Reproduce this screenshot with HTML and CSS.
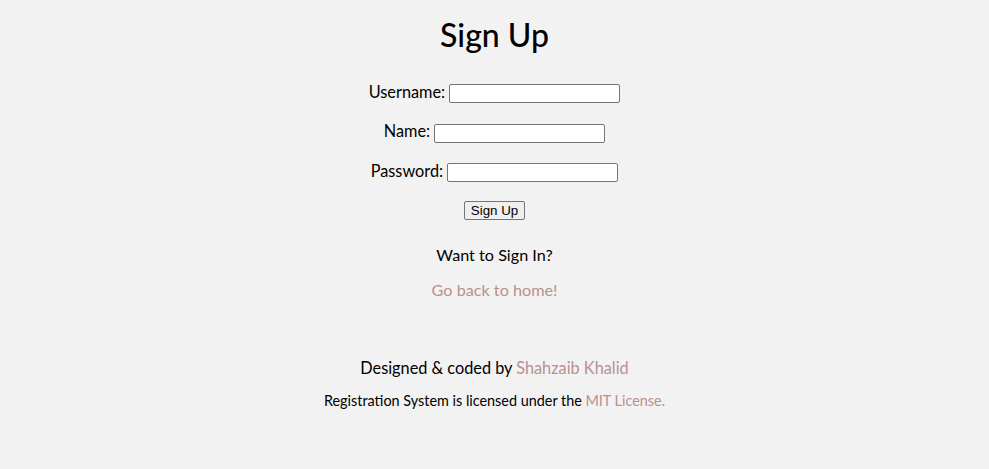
FILE: index.html
```html
<!DOCTYPE html>
<html>
<head>
<meta charset="utf-8">
<title>Sign Up</title>
<link rel="stylesheet" href="styles.css">
</head>
<body>
<main class="page">
  <h1 class="title">Sign Up</h1>
  <form class="form">
    <p class="row"><label>Username: <input type="text" class="field"></label></p>
    <p class="row"><label>Name: <input type="text" class="field"></label></p>
    <p class="row"><label>Password: <input type="password" class="field"></label></p>
    <p class="row row-last"><button type="button" class="btn">Sign Up</button></p>
  </form>
  <p class="question">Want to Sign In?</p>
  <p class="home"><a href="#" class="link">Go back to home!</a></p>
  <footer class="footer">
    <p class="credit">Designed &amp; coded by <a href="#" class="link">Shahzaib Khalid</a></p>
    <p class="license">Registration System is licensed under the <a href="#" class="link">MIT License.</a></p>
  </footer>
</main>
</body>
</html>
```
FILE: styles.css
```css
html, body {
  background: #f2f2f2;
}
body {
  margin: 0;
  font-family: Lato, "Liberation Sans", sans-serif;
  color: #000;
}
.page {
  text-align: center;
  padding-top: 16px;
}
.title {
  font-size: 32px;
  font-weight: 500;
  margin: 0 0 26px;
  line-height: 38px;
}
.form {
  margin: 0;
}
.row {
  margin: 0 0 16px;
  font-size: 16.3px;
  line-height: 23px;
}
.row-last {
  margin-top: -2px;
  margin-bottom: 25px;
}
.field {
  box-sizing: border-box;
  width: 171px;
  height: 19px;
  padding: 1px 2px;
  border: 1px solid #767676;
  border-radius: 2px;
  background: #fff;
  font-family: "Liberation Sans", Arial, sans-serif;
  font-size: 13.33px;
  vertical-align: middle;
}
.btn {
  box-sizing: border-box;
  height: 19px;
  padding: 0 6px;
  border: 1px solid #767676;
  border-radius: 2px;
  background: #efefef;
  font-family: "Liberation Sans", Arial, sans-serif;
  font-size: 13.33px;
  line-height: 15px;
  vertical-align: middle;
}
.question {
  font-size: 16.2px;
  margin: 0 0 15px;
  line-height: 20px;
}
.home {
  font-size: 16.2px;
  margin: 0;
  line-height: 20px;
}
.link {
  color: rosybrown;
  text-decoration: none;
}
.footer {
  margin-top: 58px;
}
.credit {
  font-size: 16.3px;
  margin: 0 0 14px;
  line-height: 20px;
}
.license {
  font-size: 14.4px;
  margin: 0;
  line-height: 18px;
}
```
